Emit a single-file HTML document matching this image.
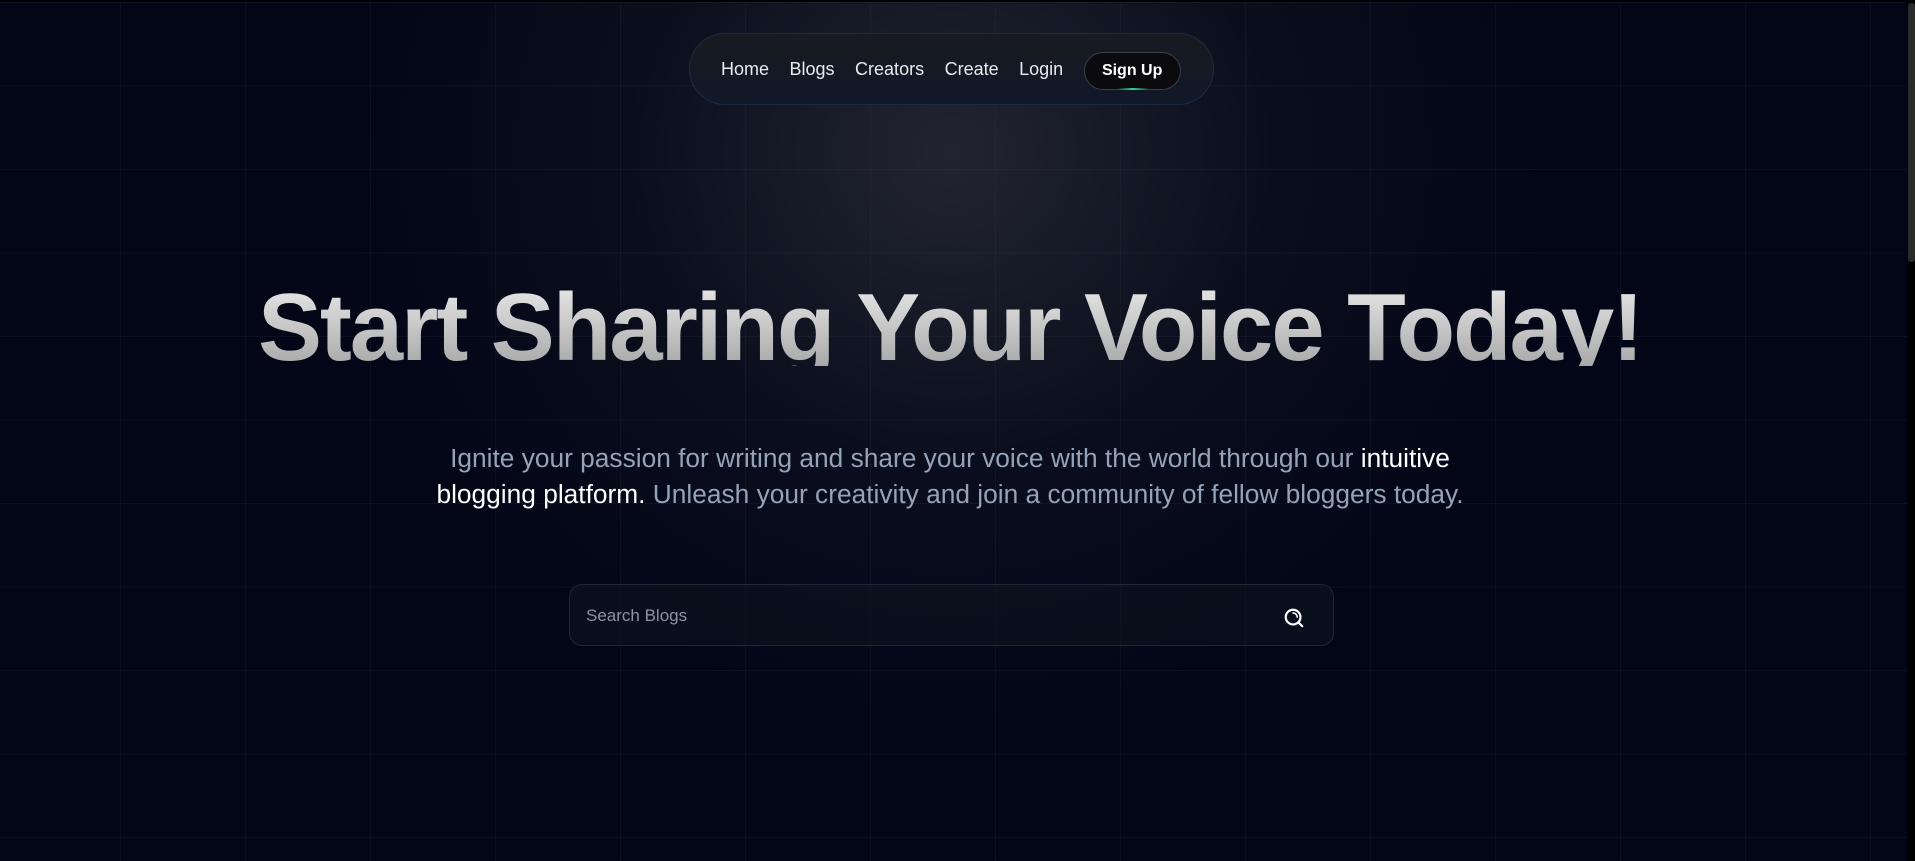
<!DOCTYPE html>
<html><head><meta charset="utf-8"><style>
*{margin:0;padding:0;box-sizing:border-box}
html,body{width:1915px;height:861px;overflow:hidden;background:#000}
body{font-family:"Liberation Sans","DejaVu Sans",sans-serif;position:relative}
.bg{position:absolute;left:0;top:2px;width:1907px;height:859px;background:#020617;overflow:hidden}
.grid{position:absolute;inset:0;background-image:linear-gradient(to right,rgba(60,70,90,.15) 1px,transparent 1px),linear-gradient(to bottom,rgba(60,70,90,.15) 1px,transparent 1px);background-size:125px 83.5px;background-position:120px 0px}
.glow{position:absolute;left:950px;top:150px;width:1300px;height:900px;transform:translate(-50%,-30%);background:radial-gradient(ellipse at 50% 30%,rgba(60,63,70,.55),rgba(30,32,40,.3) 35%,rgba(2,6,23,0) 65%)}
.scroll{position:absolute;left:1908px;top:3px;width:7px;height:259px;background:#2b2b2b;border-radius:3px}
nav{position:absolute;left:689px;top:33px;width:525px;height:72px;border-radius:36px;border:1px solid #1e2a44;background:linear-gradient(to bottom,#181a1f,#101829);display:flex;align-items:center;padding-left:31px}
nav a{color:#e8eaee;font-size:18px;margin-right:20.5px;text-decoration:none}
.su{margin-left:0px;width:97px;height:38px;border-radius:19px;background:#0b0b0d;border:1px solid #3a3f4a;color:#fff;font-weight:bold;font-size:16px;display:flex;align-items:center;justify-content:center;position:relative;margin-top:3px}
.su:after{content:"";position:absolute;bottom:-1px;left:32px;width:32px;height:2px;background:linear-gradient(to right,transparent,#34d399,transparent)}
h1{position:absolute;left:0;width:1900px;top:270px;height:96px;overflow:hidden;text-align:center;font-size:96px;line-height:116px;font-weight:bold;letter-spacing:-2.1px;background:linear-gradient(to bottom,#f2f2f2,#a9a9a9);-webkit-background-clip:text;background-clip:text;color:transparent;white-space:nowrap}
p{position:absolute;left:425px;width:1050px;top:440px;text-align:center;font-size:26.3px;line-height:36px;color:#94a3b8}
p b{color:#fff;font-weight:normal}
.search{position:absolute;left:569px;top:584px;width:765px;height:62px;border:1px solid #1f2637;border-radius:13px;background:rgba(15,20,32,.6)}
.search span{position:absolute;left:16px;top:21px;font-size:17px;color:#8a94a6}
.search svg{position:absolute;left:713px;top:22px}
</style></head><body>
<div class="bg"><div class="glow"></div><div class="grid"></div></div>
<div class="scroll"></div>
<nav><a>Home</a><a>Blogs</a><a>Creators</a><a>Create</a><a>Login</a><div class="su">Sign Up</div></nav>
<h1>Start Sharing Your Voice Today!</h1>
<p>Ignite your passion for writing and share your voice with the world through our <b>intuitive blogging platform.</b> Unleash your creativity and join a community of fellow bloggers today.</p>
<div class="search"><span>Search Blogs</span><svg width="22" height="22" viewBox="0 0 24 24" fill="none" stroke="#fff" stroke-width="2.4" stroke-linecap="round"><circle cx="11" cy="11" r="8"/><path d="M21 21l-4.3-4.3"/><path d="M11 6.5a4.5 4.5 0 0 1 4.5 4.5" stroke-width="1.8"/></svg></div>
</body></html>
